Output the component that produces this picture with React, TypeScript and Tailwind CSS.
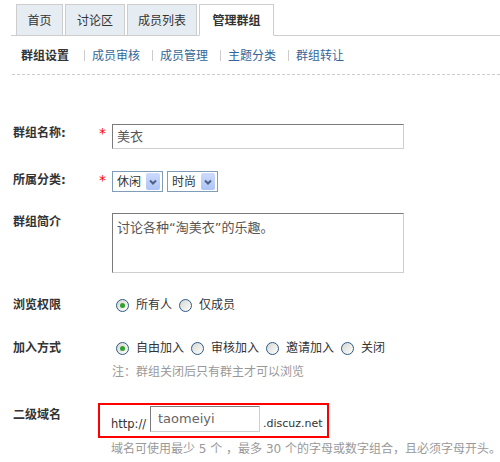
import React from "react";

const tabs = [
  { label: "首页", w: "w-[47px]", active: false },
  { label: "讨论区", w: "w-[60px]", active: false },
  { label: "成员列表", w: "w-[70px]", active: false },
  { label: "管理群组", w: "w-[75px]", active: true },
];

const subLinks = ["成员审核", "成员管理", "主题分类", "群组转让"];

function Radio({ checked }: { checked?: boolean }) {
  return (
    <span className="flex h-[13px] w-[13px] shrink-0 items-center justify-center rounded-full border border-[#2b5a85] bg-linear-to-br from-[#d6d6d0] to-white">
      {checked && <span className="h-[5px] w-[5px] rounded-full bg-[#2fa12f]" />}
    </span>
  );
}

function RadioGroup({ options }: { options: string[] }) {
  return (
    <div className="flex h-[18px] items-center">
      {options.map((o, i) => (
        <div key={o} className={`flex items-center ${i === 0 ? "ml-[4px]" : "ml-[7px]"}`}>
          <Radio checked={i === 0} />
          <span className="ml-[7px] leading-[18px]">{o}</span>
        </div>
      ))}
    </div>
  );
}

function FakeSelect({ value }: { value: string }) {
  return (
    <div className="flex h-[21px] w-[51px] items-center justify-between border border-[#7f9db9] bg-white pl-[4px] pr-[2px]">
      <span className="leading-[16px]">{value}</span>
      <span className="flex h-[17px] w-[14px] items-center justify-center rounded-[2px] bg-linear-to-b from-[#cddafc] to-[#aec4f6]">
        <svg width="8" height="6" viewBox="0 0 8 6">
          <path d="M1 1.5 L4 4.5 L7 1.5" fill="none" stroke="#4d6185" strokeWidth="2" />
        </svg>
      </span>
    </div>
  );
}

function Row({
  label,
  required,
  className,
  children,
}: {
  label: string;
  required?: boolean;
  className?: string;
  children: React.ReactNode;
}) {
  return (
    <div className={`flex items-start ${className ?? ""}`}>
      <div className="w-[86px] shrink-0 font-bold leading-[18px]">{label}</div>
      <div className="h-[18px] w-[13px] shrink-0 font-['DejaVu_Sans',sans-serif] text-[14px] leading-[18px] text-[#f00]">
        {required ? "*" : ""}
      </div>
      <div>{children}</div>
    </div>
  );
}

export default function App() {
  return (
    <div className="h-[462px] w-[500px] overflow-hidden bg-white font-['DejaVu_Sans','Noto_Sans_CJK_SC',sans-serif] text-[12px] text-[#333]">
      {/* tabs */}
      <div className="ml-[11px] mt-[4px] flex gap-[2px] border-b border-[#cdcdcd] pl-[5px]">
        {tabs.map((t) => (
          <div
            key={t.label}
            className={`-mb-px flex h-[32px] items-center justify-center border border-[#cdcdcd] font-['Noto_Sans_CJK_SC',sans-serif] text-[12px] ${t.w} ${
              t.active ? "border-b-white bg-white font-bold" : "bg-[#e5ecf2]"
            }`}
          >
            {t.label}
          </div>
        ))}
      </div>

      {/* sub nav */}
      <div className="ml-[12px] flex h-[39px] items-center border-b border-dashed border-[#cccccc] pl-[9px] font-['Noto_Sans_CJK_SC',sans-serif] leading-[20px]">
        <span className="mr-[3px] font-bold">群组设置</span>
        {subLinks.map((l) => (
          <React.Fragment key={l}>
            <span className="ml-[12px] mr-[7px] h-[11px] w-px bg-[#cccccc]" />
            <span className="text-[#336699]">{l}</span>
          </React.Fragment>
        ))}
      </div>

      {/* form */}
      <div className="pl-[13px]">
        <Row label="群组名称:" required className="mt-[49px]">
          <div className="h-[25px] w-[292px] border border-t-[#7a7a7a] border-l-[#7a7a7a] border-r-[#cfcfcf] border-b-[#cfcfcf] px-[4px] pt-[3px] text-[13px] leading-[18px] text-[#555]">
            美衣
          </div>
        </Row>

        <Row label="所属分类:" required className="mt-[22px]">
          <div className="flex gap-[4px]">
            <FakeSelect value="休闲" />
            <FakeSelect value="时尚" />
          </div>
        </Row>

        <Row label="群组简介" className="mt-[21px]">
          <div className="h-[60px] w-[292px] border border-t-[#7a7a7a] border-l-[#7a7a7a] border-r-[#cfcfcf] border-b-[#cfcfcf] px-[4px] pt-[5px] text-[13px] leading-[18px] text-[#555]">
            讨论各种<span className="font-['DejaVu_Sans',sans-serif]">“</span>淘美衣
            <span className="font-['DejaVu_Sans',sans-serif]">”</span>的乐趣。
          </div>
        </Row>

        <Row label="浏览权限" className="mt-[23px]">
          <RadioGroup options={["所有人", "仅成员"]} />
        </Row>

        <Row label="加入方式" className="mt-[25px]">
          <RadioGroup options={["自由加入", "审核加入", "邀请加入", "关闭"]} />
          <div className="mt-[6px] leading-[18px] text-[#999]">注：群组关闭后只有群主才可以浏览</div>
        </Row>

        <div className="mt-[22px] flex items-start">
          <div className="w-[85px] shrink-0 pt-[3px] font-bold leading-[18px]">二级域名</div>
          <div>
            <div className="flex h-[35px] w-[231px] items-end border-2 border-[#ff0000] pb-[4px] pl-[11px] pt-[1px]">
              <span className="mb-[1px] w-[39px] text-[11.5px] leading-[14px] text-[#333]">http://</span>
              <div className="h-[26px] w-[110px] border border-t-[#7a7a7a] border-l-[#7a7a7a] border-r-[#cfcfcf] border-b-[#cfcfcf] pl-[7px] pt-[4px] text-[13px] leading-[16px] text-[#666]">
                taomeiyi
              </div>
              <span className="mb-[1px] ml-[3px] text-[11px] leading-[14px] text-[#333]">.discuz.net</span>
            </div>
            <div className="mt-[2px] whitespace-nowrap pl-[13px] leading-[18px] text-[#999]">
              域名可使用最少 5 个 ，最多 30 个的字母或数字组合，且必须字母开头。
            </div>
          </div>
        </div>
      </div>
    </div>
  );
}
